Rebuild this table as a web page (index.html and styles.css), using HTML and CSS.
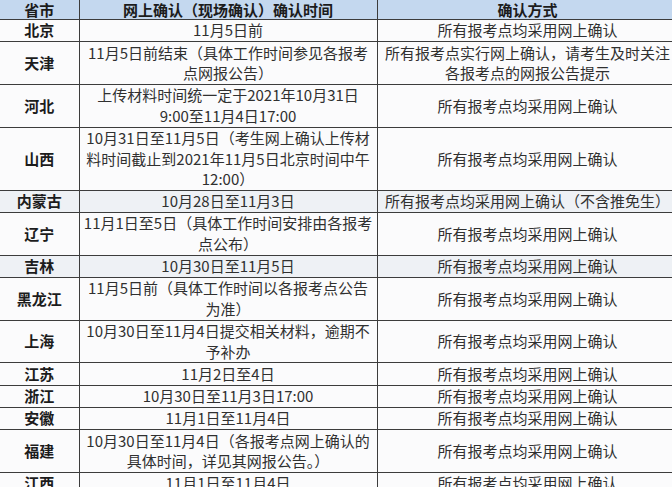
FILE: index.html
```html
<!DOCTYPE html>
<html lang="zh-CN">
<head>
<meta charset="utf-8">
<title>网上确认时间</title>
<link rel="stylesheet" href="styles.css">
</head>
<body>
<table class="sheet">
  <colgroup>
    <col class="c-prov">
    <col class="c-time">
    <col class="c-way">
  </colgroup>
  <thead>
    <tr class="head">
      <th>省市</th>
      <th>网上确认（现场确认）确认时间</th>
      <th>确认方式</th>
    </tr>
  </thead>
  <tbody>
    <tr><th>北京</th><td>11月5日前</td><td>所有报考点均采用网上确认</td></tr>
    <tr><th>天津</th><td>11月5日前结束（具体工作时间参见各报考<br>点网报公告）</td><td>所有报考点实行网上确认，请考生及时关注<br>各报考点的网报公告提示</td></tr>
    <tr><th>河北</th><td>上传材料时间统一定于2021年10月31日<br>9:00至11月4日17:00</td><td>所有报考点均采用网上确认</td></tr>
    <tr><th>山西</th><td>10月31日至11月5日（考生网上确认上传材<br>料时间截止到2021年11月5日北京时间中午<br>12:00）</td><td>所有报考点均采用网上确认</td></tr>
    <tr class="shade"><th>内蒙古</th><td>10月28日至11月3日</td><td>所有报考点均采用网上确认（不含推免生）</td></tr>
    <tr><th>辽宁</th><td>11月1日至5日（具体工作时间安排由各报考<br>点公布）</td><td>所有报考点均采用网上确认</td></tr>
    <tr class="shade"><th>吉林</th><td>10月30日至11月5日</td><td>所有报考点均采用网上确认</td></tr>
    <tr><th>黑龙江</th><td>11月5日前（具体工作时间以各报考点公告<br>为准）</td><td>所有报考点均采用网上确认</td></tr>
    <tr><th>上海</th><td>10月30日至11月4日提交相关材料，逾期不<br>予补办</td><td>所有报考点均采用网上确认</td></tr>
    <tr><th>江苏</th><td>11月2日至4日</td><td>所有报考点均采用网上确认</td></tr>
    <tr><th>浙江</th><td>10月30日至11月3日17:00</td><td>所有报考点均采用网上确认</td></tr>
    <tr><th>安徽</th><td>11月1日至11月4日</td><td>所有报考点均采用网上确认</td></tr>
    <tr><th>福建</th><td>10月30日至11月4日（各报考点网上确认的<br>具体时间，详见其网报公告。）</td><td>所有报考点均采用网上确认</td></tr>
    <tr><th>江西</th><td>11月1日至11月4日</td><td>所有报考点均采用网上确认</td></tr>
  </tbody>
</table>
</body>
</html>
```
FILE: styles.css
```css
html, body {
  margin: 0;
  padding: 0;
  background: #ffffff;
  overflow: hidden;
}

.sheet {
  border-collapse: collapse;
  table-layout: fixed;
  width: 678px;
  font-family: "Noto Sans CJK SC", "Microsoft YaHei", sans-serif;
  font-size: 15px;
  color: #303030;
  background: #fbfbfc;
}

.c-prov { width: 79px; }
.c-time { width: 298px; }
.c-way { width: 301px; }

.sheet th,
.sheet td {
  border: 1px solid #3c3c3c;
  padding: 0.45px 0;
  line-height: 20.4px;
  text-align: center;
  vertical-align: middle;
  white-space: nowrap;
  overflow: visible;
}

.sheet tr > :first-child { border-left: none; }
.sheet .head > * { border-top: none; }

.sheet tbody th {
  font-weight: 700;
  color: #1c1c1c;
}

.head th {
  background: #c4d8ef;
  font-weight: 700;
  color: #1c1c1c;
  line-height: 19px;
  padding: 0;
}

.shade th,
.shade td {
  background: #eef1f5;
}
```
